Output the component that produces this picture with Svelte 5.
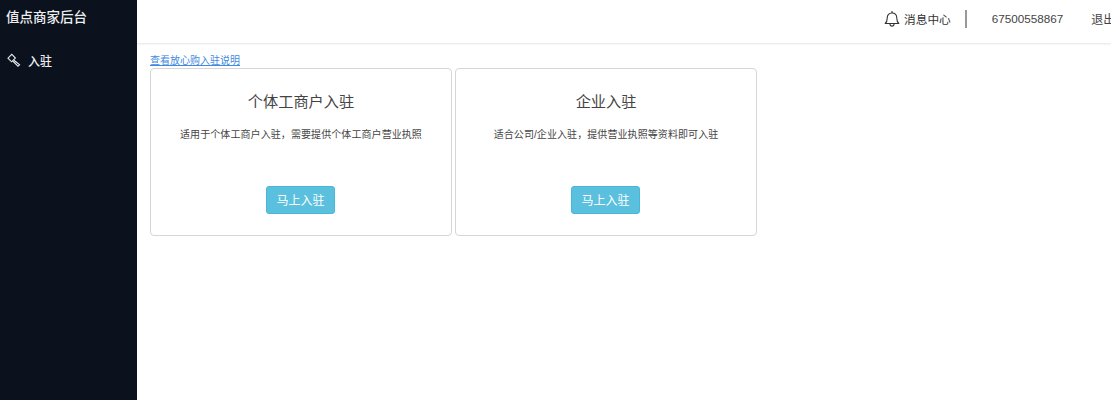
<script>
  const cards = [
    { title: '个体工商户入驻', desc: '适用于个体工商户入驻，需要提供个体工商户营业执照' },
    { title: '企业入驻', desc: '适合公司/企业入驻，提供营业执照等资料即可入驻' }
  ];
</script>

<div class="layout">
  <aside class="sidebar">
    <div class="brand">值点商家后台</div>
    <nav class="menu">
      <div class="menu-item">
        <svg class="menu-icon" width="14" height="14" viewBox="0 0 14 14" fill="none" stroke="#e4e6e8" stroke-width="1.1">
          <path d="M1 5.200 4.800 1.400 8.400 5 4.600 8.800z" />
          <path d="M7 7.200 12.600 11.800 11 13.200 5.800 8" />
        </svg>
        <span>入驻</span>
      </div>
    </nav>
  </aside>

  <div class="main">
    <header class="topbar">
      <div class="notice">
        <svg width="16" height="17" viewBox="0 0 16 17" fill="none" stroke="#333" stroke-width="1.1">
          <path d="M1.200 13.500C2.800 12 3.200 10.800 3.200 8.200 3.200 5 5 3 8 3s4.800 2 4.800 5.200c0 2.600.4 3.800 2 5.300z" stroke-linejoin="round" />
          <path d="M8 1v2" />
          <path d="M6 14c0 1.300.8 2.100 2 2.100s2-.8 2-2.100" />
        </svg>
        <span>消息中心</span>
      </div>
      <span class="divider"></span>
      <span class="phone">67500558867</span>
      <span class="logout">退出</span>
    </header>

    <section class="content">
      <a class="guide" href="#guide">查看放心购入驻说明</a>
      <div class="cards">
        {#each cards as card}
          <div class="card">
            <h3>{card.title}</h3>
            <p>{card.desc}</p>
            <button type="button">马上入驻</button>
          </div>
        {/each}
      </div>
    </section>
  </div>
</div>

<style>
  :global(body) {
    margin: 0;
    background: #fff;
    overflow: hidden;
  }

  .layout {
    display: flex;
    height: 400px;
    font-family: "Liberation Sans", "Noto Sans CJK SC", sans-serif;
    color: #333;
  }

  .sidebar {
    flex: none;
    width: 137px;
    background: #0b121d;
    color: #eceef0;
  }

  .brand {
    padding: 9px 0 0 6px;
    font-size: 13.500px;
    line-height: 18px;
    font-weight: 500;
  }

  .menu {
    margin-top: 23px;
  }

  .menu-item {
    display: flex;
    align-items: center;
    gap: 7px;
    padding-left: 7px;
    height: 20px;
    font-size: 12px;
    font-weight: 500;
  }

  .main {
    flex: 1;
    min-width: 0;
    overflow: hidden;
  }

  .topbar {
    display: flex;
    align-items: center;
    height: 37px;
    padding-bottom: 6px;
    border-bottom: 1px solid #ededed;
    box-shadow: 0 1px 1px #f7f7f7;
    font-size: 11.700px;
    white-space: nowrap;
  }

  .topbar > * {
    flex: none;
  }

  .notice {
    display: flex;
    align-items: center;
    gap: 4px;
    margin-left: 747px;
    margin-top: -1px;
  }

  .divider {
    width: 2px;
    height: 18px;
    margin-left: 14px;
    background: #999;
  }

  .phone {
    margin-left: 25px;
    color: #444;
    font-size: 11.700px;
    margin-top: -1px;
  }

  .logout {
    margin-left: 28px;
    color: #444;
    font-size: 12px;
    margin-top: -1px;
  }

  .content {
    padding: 9px 0 0 13px;
  }

  .guide {
    display: block;
    font-size: 10px;
    line-height: 15px;
    color: #3f8ae0;
  }

  .cards {
    display: flex;
    gap: 3px;
  }

  .card {
    box-sizing: border-box;
    display: flex;
    flex-direction: column;
    align-items: center;
    width: 302px;
    height: 168px;
    border: 1px solid #d6d6d6;
    border-radius: 4px;
    background: #fff;
  }

  h3 {
    margin: 23px 0 0;
    font-size: 15.200px;
    line-height: 20px;
    font-weight: 400;
    color: #444;
  }

  p {
    margin: 16px 0 0;
    font-size: 10px;
    letter-spacing: 0.08px;
    line-height: 14px;
    color: #444;
  }

  button {
    margin-top: 44px;
    margin-right: 2px;
    width: 69px;
    height: 28px;
    padding: 0 0 1px 1px;
    border: 1px solid #46b8da;
    border-radius: 3px;
    background: #5bc0de;
    color: #fff;
    font: inherit;
    font-size: 12px;
  }
</style>
